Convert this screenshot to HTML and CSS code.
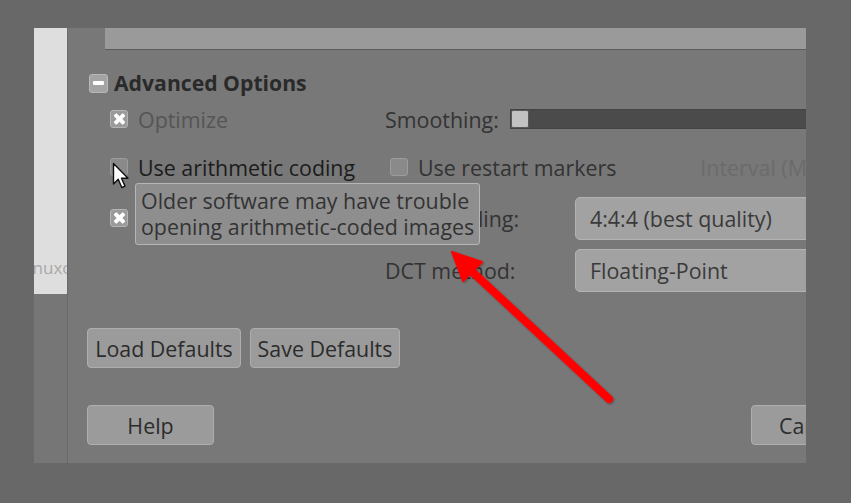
FILE: index.html
```html
<!DOCTYPE html>
<html lang="en">
<head>
<meta charset="utf-8">
<title>Export Image as JPEG</title>
<link rel="stylesheet" href="styles.css">
</head>
<body>
<div class="screen">
  <div class="window">
    <aside class="sidebar">
      <div class="sidebar-page"><span class="watermark">linuxconfig</span></div>
    </aside>
    <section class="dialog">
      <div class="preview-bar"></div>

      <div class="expander">
        <span class="expander-box"><span class="minus"></span></span>
        <span class="expander-title">Advanced Options</span>
      </div>

      <div class="options">
        <label class="check insensitive"><span class="box checked"></span>Optimize</label>
        <div class="field wide">
          <span class="field-label">Smoothing:</span>
          <div class="slider"><span class="handle"></span></div>
        </div>

        <label class="check hover"><span class="box"></span>Use arithmetic coding</label>
        <div class="field wide">
          <label class="check inset"><span class="box"></span>Use restart markers</label>
          <span class="interval">Interval (MCU rows):</span>
        </div>

        <label class="check"><span class="box checked"></span>Progressive</label>
        <span class="field-label">Subsampling:</span>
        <div class="combo">4:4:4 (best quality)</div>

        <span class="empty"></span>
        <span class="field-label">DCT method:</span>
        <div class="combo">Floating-Point</div>
      </div>

      <div class="defaults-row">
        <button class="btn load">Load Defaults</button>
        <button class="btn save">Save Defaults</button>
      </div>

      <div class="action-row">
        <button class="btn help">Help</button>
        <button class="btn cancel">Cancel</button>
      </div>

      <div class="tooltip">Older software may have trouble<br>opening arithmetic-coded images</div>

      <svg class="pointer" width="19" height="28" viewBox="0 0 19 28">
        <path d="M1.5 1.5 L1.5 22 L6.2 17.3 L9.8 25.5 L13 24.1 L9.5 16.2 L16 16.2 Z" fill="#ffffff" stroke="#111111" stroke-width="1.4" stroke-linejoin="round"/>
      </svg>
    </section>
  </div>

  <svg class="annotation" width="851" height="503" viewBox="0 0 851 503">
    <defs>
      <filter id="soft" x="-10%" y="-10%" width="120%" height="120%">
        <feDropShadow dx="1" dy="1" stdDeviation="1.2" flood-color="#000" flood-opacity="0.35"/>
      </filter>
    </defs>
    <g filter="url(#soft)" fill="#ff0000" stroke="#ff0000">
      <line x1="609" y1="399" x2="466" y2="266" stroke-width="8" stroke-linecap="round"/>
      <polygon points="452,252 482,262 463,281" stroke-width="2" stroke-linejoin="round"/>
    </g>
  </svg>
</div>
</body>
</html>
```

FILE: styles.css
```css
* {
  box-sizing: border-box;
}

html, body {
  margin: 0;
  padding: 0;
}

body {
  background: #686868;
  font-family: "Open Sans", "Noto Sans", "DejaVu Sans", sans-serif;
  font-size: 21.4px;
  color: #333333;
}

.screen {
  position: relative;
  width: 851px;
  height: 503px;
  padding: 28px 0 0 34px;
  overflow: hidden;
  background: #686868;
}

.window {
  display: flex;
  width: 772px;
  height: 435px;
  overflow: hidden;
}

/* left strip: the canvas page beside the dialog */
.sidebar {
  flex: 0 0 34px;
  background: #767676;
  border-right: 1px solid #6a6a6a;
  overflow: hidden;
}

.sidebar-page {
  height: 266px;
  background: #dedede;
  display: flex;
  flex-direction: column;
  justify-content: flex-end;
  padding-bottom: 14px;
  overflow: hidden;
}

.watermark {
  display: block;
  margin-left: -10px;
  font-size: 17px;
  line-height: 24px;
  color: #a9a9a9;
  white-space: nowrap;
}

.dialog {
  position: relative;
  flex: 0 0 900px;
  background: #787878;
}

.preview-bar {
  margin-left: 37px;
  height: 22px;
  background: #9a9a9a;
  border-bottom: 1px solid #5c5c5c;
}

/* Advanced Options expander */
.expander {
  display: flex;
  align-items: center;
  gap: 6px;
  height: 22px;
  margin: 22px 0 0 21px;
}

.expander-box {
  display: flex;
  align-items: center;
  justify-content: center;
  width: 19px;
  height: 19px;
  background: #a4a4a4;
  border: 1px solid #b8b8b8;
  border-radius: 3px;
}

.minus {
  width: 11px;
  height: 4px;
  background: #ffffff;
  border-radius: 1px;
}

.expander-title {
  font-weight: 700;
  font-size: 21.2px;
  color: #2a2a2a;
  line-height: 22px;
}

/* option grid */
.options {
  display: grid;
  grid-template-columns: 275px 190px 1fr;
  grid-template-rows: 38px 58px 44px 60px;
  align-items: center;
  margin: 6px 0 0 42px;
}

.field {
  display: flex;
  align-items: center;
}

.field.wide {
  grid-column: 2 / 4;
}

.field-label {
  white-space: nowrap;
  color: #333333;
}

.check {
  display: flex;
  align-items: center;
  gap: 10px;
  white-space: nowrap;
  color: #333333;
}

.check.insensitive {
  color: #555555;
}

.check.hover {
  color: #1c1c1c;
}

.check.inset {
  margin-left: 5px;
}

.box {
  position: relative;
  flex: 0 0 18px;
  width: 18px;
  height: 18px;
  background: #8a8a8a;
  border: 1px solid #9c9c9c;
  border-radius: 3px;
}

.box.checked {
  background: #9a9a9a;
  border-color: #b4b4b4;
}

.box.checked::before,
.box.checked::after {
  content: "";
  position: absolute;
  left: 1.5px;
  top: 5.5px;
  width: 13px;
  height: 4px;
  background: #ffffff;
  border-radius: 1px;
  transform: rotate(45deg);
}

.box.checked::after {
  transform: rotate(-45deg);
}

.slider {
  position: relative;
  flex: 0 0 400px;
  height: 20px;
  margin-left: 11px;
  background: #4b4b4b;
  border: 1px solid #444444;
}

.handle {
  position: absolute;
  left: 0;
  top: 0;
  width: 18px;
  height: 18px;
  background: #c2c2c2;
  border: 1px solid #5a5a5a;
  border-radius: 2px;
}

.interval {
  margin-left: 84px;
  white-space: nowrap;
  color: #6b6b6b;
}

.combo {
  width: 300px;
  height: 43px;
  display: flex;
  align-items: center;
  padding-left: 14px;
  background: #a2a2a2;
  border: 1px solid #b3b3b3;
  border-radius: 5px;
  color: #3a3a3a;
  white-space: nowrap;
}

/* buttons */
.btn {
  height: 40px;
  padding: 0;
  font: inherit;
  color: #2c2c2c;
  background: #9b9b9b;
  border: 1px solid #aeaeae;
  border-radius: 4px;
  white-space: nowrap;
}

.defaults-row {
  display: flex;
  gap: 9px;
  margin: 28px 0 0 19px;
}

.load {
  width: 154px;
}

.save {
  width: 150px;
}

.action-row {
  display: flex;
  margin: 37px 0 0 19px;
}

.help {
  width: 127px;
}

.cancel {
  width: 127px;
  margin-left: 537px;
  text-align: left;
  padding-left: 27px;
}

/* hover tooltip */
.tooltip {
  position: absolute;
  left: 67px;
  top: 155px;
  width: 345px;
  height: 62px;
  padding: 4px 0 0 5px;
  background: #8e8e8e;
  border: 1px solid #b6b6b6;
  border-radius: 3px;
  line-height: 26px;
  color: #333333;
  white-space: nowrap;
}

.pointer {
  position: absolute;
  left: 44px;
  top: 134px;
}

.annotation {
  position: absolute;
  left: 0;
  top: 0;
  pointer-events: none;
}
```
